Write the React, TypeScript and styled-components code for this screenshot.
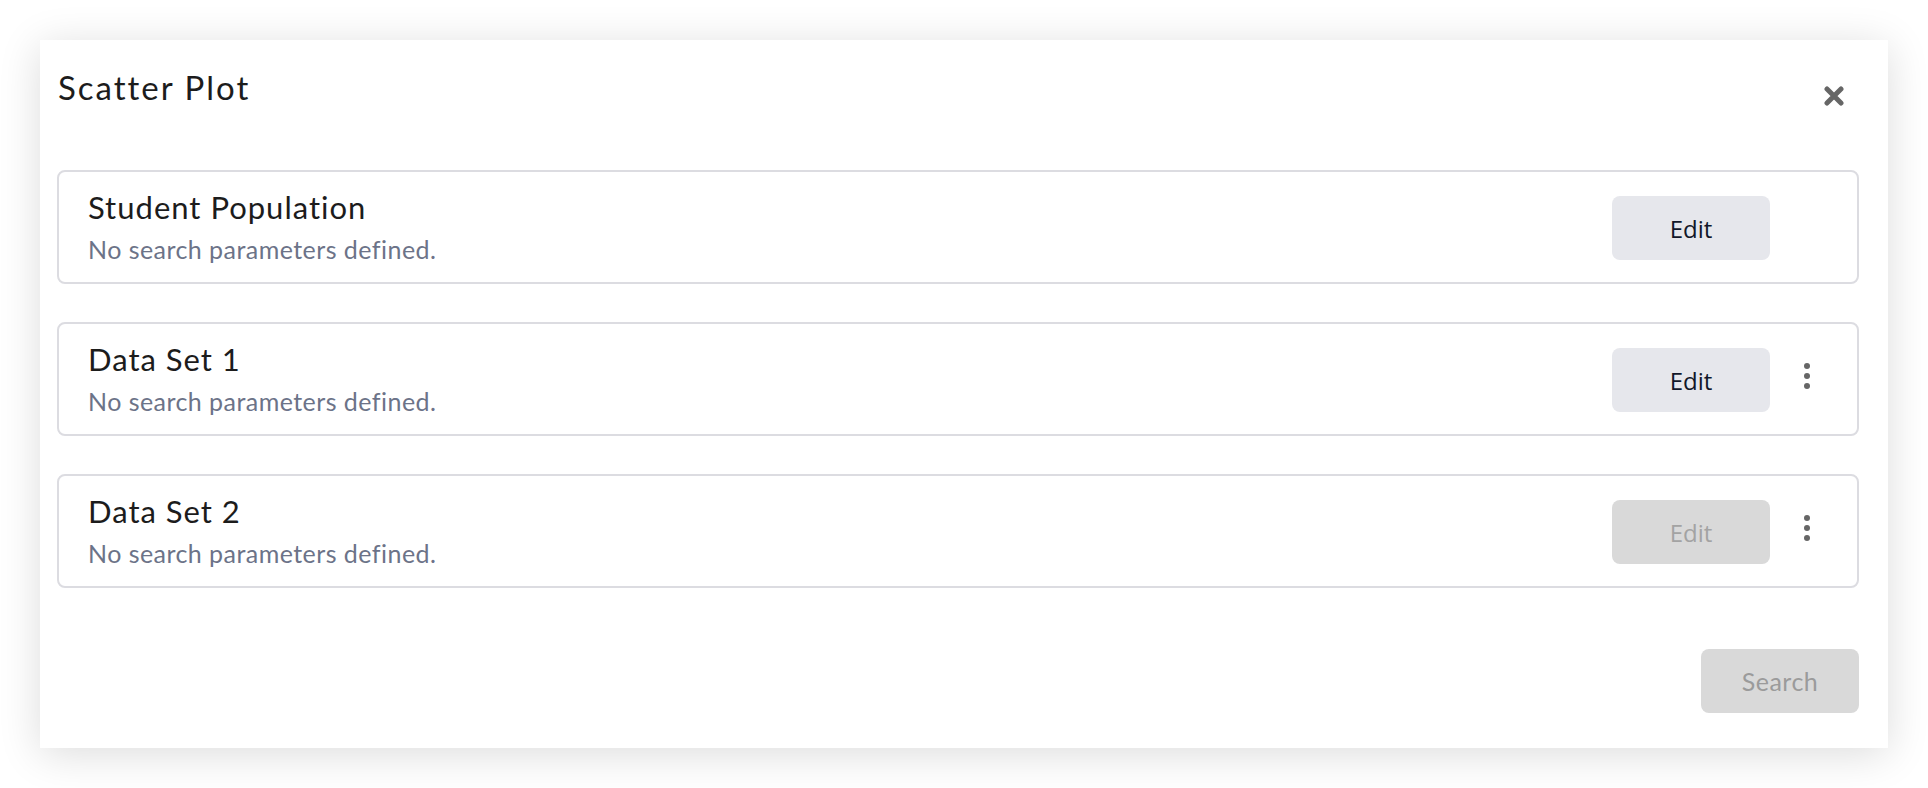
import styled, { createGlobalStyle } from 'styled-components';

const GlobalStyle = createGlobalStyle`
  html, body {
    margin: 0;
    padding: 0;
    background: #ffffff;
  }

  body {
    font-family: Lato, 'Liberation Sans', sans-serif;
    -webkit-font-smoothing: antialiased;
  }
`;

interface DataSource {
  id: string;
  name: string;
  summary: string;
  editable: boolean;
  removable: boolean;
}

const sources: DataSource[] = [
  { id: 'population', name: 'Student Population', summary: 'No search parameters defined.', editable: true, removable: false },
  { id: 'set-1', name: 'Data Set 1', summary: 'No search parameters defined.', editable: true, removable: true },
  { id: 'set-2', name: 'Data Set 2', summary: 'No search parameters defined.', editable: false, removable: true },
];

export default function App() {
  return (
    <>
      <GlobalStyle />
      <Dialog role="dialog" aria-labelledby="scatter-title">
        <Header>
          <Title id="scatter-title">Scatter Plot</Title>
          <CloseButton type="button" aria-label="Close">
            <svg width="20" height="20" viewBox="0 0 20 20" fill="none">
              <path d="M3 3L17 17M17 3L3 17" stroke="#666666" strokeWidth="5" strokeLinecap="round" />
            </svg>
          </CloseButton>
        </Header>

        <SourceList>
          {sources.map((source) => (
            <SourceCard key={source.id}>
              <SourceText>
                <SourceName>{source.name}</SourceName>
                <SourceSummary>{source.summary}</SourceSummary>
              </SourceText>
              <EditButton type="button" disabled={!source.editable}>
                Edit
              </EditButton>
              <MenuSlot>
                {source.removable && (
                  <MenuButton type="button" aria-label={`${source.name} options`}>
                    <Dot />
                    <Dot />
                    <Dot />
                  </MenuButton>
                )}
              </MenuSlot>
            </SourceCard>
          ))}
        </SourceList>

        <Footer>
          <SearchButton type="button" disabled>
            Search
          </SearchButton>
        </Footer>
      </Dialog>
    </>
  );
}

const Dialog = styled.section`
  box-sizing: border-box;
  margin: 40px;
  padding: 28px 29px 35px 17px;
  background: #ffffff;
  box-shadow: 0 6px 40px rgba(0, 0, 0, 0.14);
`;

const Header = styled.header`
  display: flex;
  align-items: flex-start;
  justify-content: space-between;
  padding-left: 1px;
`;

const Title = styled.h1`
  margin: 0;
  font-size: 33px;
  line-height: 1.2;
  font-weight: 400;
  letter-spacing: 2px;
  color: #1c1c1c;
`;

const CloseButton = styled.button`
  display: flex;
  align-items: center;
  justify-content: center;
  width: 20px;
  height: 20px;
  margin: 18px 15px 0 0;
  padding: 0;
  border: 0;
  background: none;
  cursor: pointer;
`;

const SourceList = styled.div`
  display: flex;
  flex-direction: column;
  gap: 38px;
  margin-top: 62px;
`;

const SourceCard = styled.div`
  display: flex;
  align-items: center;
  padding: 17px 13px 18px 29px;
  border: 2px solid #dcdce1;
  border-radius: 8px;
`;

const SourceText = styled.div`
  display: flex;
  flex: 1;
  min-width: 0;
  flex-direction: column;
  gap: 10px;
`;

const SourceName = styled.div`
  font-size: 31px;
  line-height: 36px;
  letter-spacing: 1px;
  color: #1c1c1c;
`;

const SourceSummary = styled.div`
  font-size: 25px;
  line-height: 29px;
  letter-spacing: 0.45px;
  color: #6c7388;
`;

const EditButton = styled.button`
  width: 158px;
  height: 64px;
  margin-top: 4px;
  padding: 0;
  border: 0;
  border-radius: 8px;
  background: #e6e7ec;
  color: #111729;
  font-family: 'Open Sans', 'Liberation Sans', sans-serif;
  font-size: 24px;
  cursor: pointer;

  &:disabled {
    background: #d9d9d9;
    color: #a3a3a3;
    cursor: not-allowed;
  }
`;

const MenuSlot = styled.div`
  display: flex;
  width: 74px;
  justify-content: center;
`;

const MenuButton = styled.button`
  display: flex;
  flex-direction: column;
  align-items: center;
  gap: 4px;
  margin-top: -4px;
  padding: 4px 8px;
  border: 0;
  background: none;
  cursor: pointer;
`;

const Dot = styled.span`
  width: 6px;
  height: 6px;
  border-radius: 50%;
  background: #666666;
`;

const Footer = styled.footer`
  display: flex;
  justify-content: flex-end;
  margin-top: 61px;
`;

const SearchButton = styled.button`
  width: 158px;
  height: 64px;
  padding: 0;
  border: 0;
  border-radius: 8px;
  background: #d9d9d9;
  color: #9b9b9b;
  font-family: Lato, 'Liberation Sans', sans-serif;
  font-size: 25px;
  letter-spacing: 0.5px;
  cursor: pointer;

  &:disabled {
    cursor: not-allowed;
  }
`;
